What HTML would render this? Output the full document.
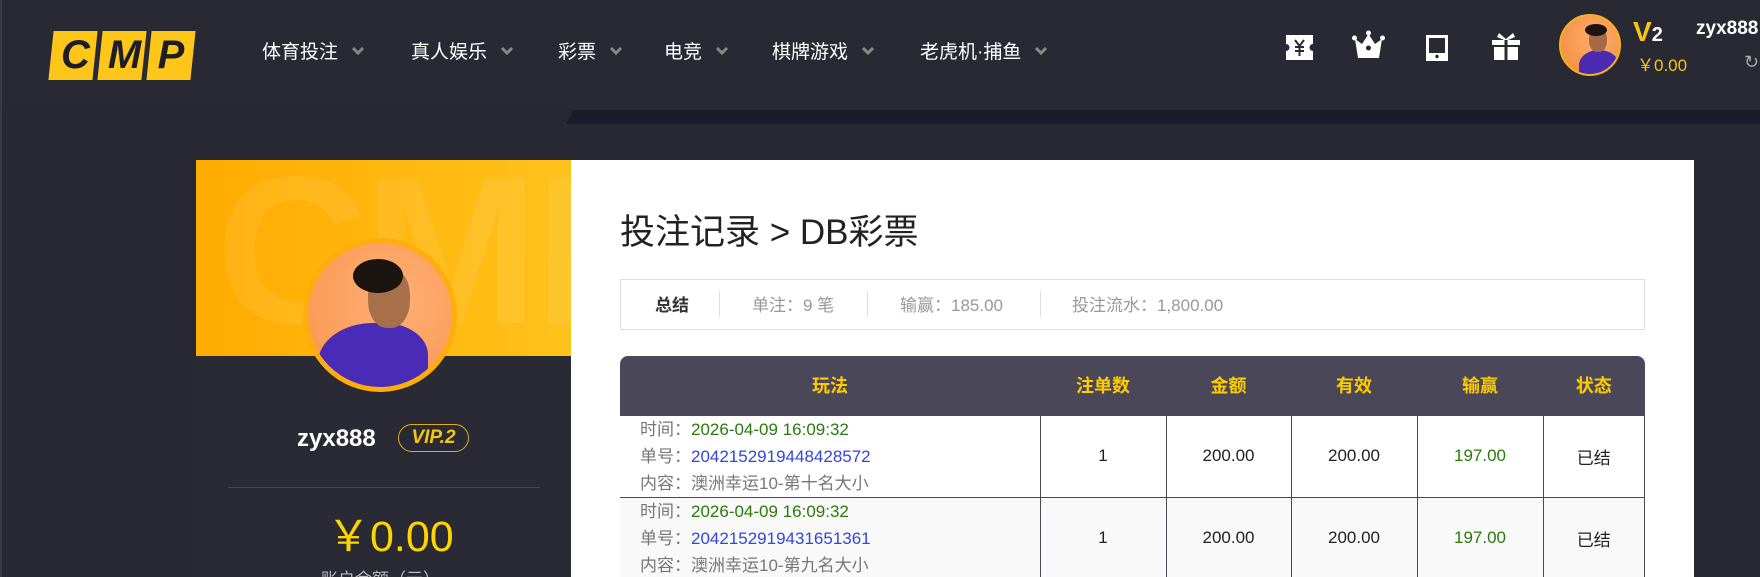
<!DOCTYPE html>
<html style="background:#282833;overflow:hidden;height:577px"><head><meta charset="utf-8">
<style>
*{margin:0;padding:0;box-sizing:border-box}
body{width:1760px;height:577px;overflow:hidden;background:#282833;font-family:"Liberation Sans","Noto Sans CJK SC",sans-serif;position:relative}
.abs{position:absolute}
.hdr{left:0;top:0;width:1760px;height:110px;background:#292934}
.nav{top:37px;font-size:19px;color:#fff;white-space:nowrap}
.chev{display:inline-block;margin-left:14px;vertical-align:3px}
.card{left:196px;top:160px;width:1498px;height:417px;background:#fff}
.lp{left:196px;top:160px;width:375px;height:417px;background:#2a2a34}
.yel{left:196px;top:160px;width:375px;height:196px;background:linear-gradient(90deg,#ffab00,#ffc21c);overflow:hidden}
.sum{left:620px;top:279px;width:1025px;height:51px;border:1px solid #dedede;font-size:17px;color:#999}
.sum span{position:absolute;top:11px;white-space:nowrap}
.sep{position:absolute;top:11px;width:1px;height:26px;background:#ddd}
table{position:absolute;left:620px;top:356px;width:1025px;border-collapse:collapse;font-size:17px}
th{background:#4a4858;color:#ffcc00;height:59px;font-size:18px;font-weight:bold}
td{border:1px solid #4a4858;text-align:center;color:#222;height:79px}
td.l{text-align:left;padding-left:20px;line-height:27px;color:#777;border-left:none}
.g{color:#2b7a0b}.b{color:#3345dd}
</style></head><body>
<div class="abs hdr"></div>
<div class="abs" style="left:0;top:0;width:2px;height:577px;background:#3a3a44"></div>
<div class="abs" style="left:572px;top:110px;width:1188px;height:14px;background:#1c1b2b"></div>
<div class="abs" style="left:566px;top:110px;width:0;height:0;border-right:8px solid #1c1b2b;border-top:14px solid transparent"></div>
<div class="abs" style="left:51px;top:31px">
 <div class="abs" style="left:0;top:0;width:44px;height:49px;background:#ffc61a;transform:skewX(-6deg)"></div>
 <div class="abs" style="left:49px;top:0;width:44px;height:49px;background:#ffc61a;transform:skewX(-6deg)"></div>
 <div class="abs" style="left:98px;top:0;width:44px;height:49px;background:#ffc61a;transform:skewX(-6deg)"></div>
 <div class="abs" style="left:0;top:2px;width:142px;font:italic bold 40px 'Liberation Sans',sans-serif;color:#1d1d25;display:flex"><span style="width:49px;text-align:center">C</span><span style="width:49px;text-align:center">M</span><span style="width:44px;text-align:center">P</span></div>
</div>
<div class="abs nav" style="left:262px">体育投注<svg class="chev" width="12" height="8"><path d="M1 1L6 6L11 1" stroke="#888" stroke-width="3" fill="none"/></svg></div>
<div class="abs nav" style="left:411px">真人娱乐<svg class="chev" width="12" height="8"><path d="M1 1L6 6L11 1" stroke="#888" stroke-width="3" fill="none"/></svg></div>
<div class="abs nav" style="left:558px">彩票<svg class="chev" width="12" height="8"><path d="M1 1L6 6L11 1" stroke="#888" stroke-width="3" fill="none"/></svg></div>
<div class="abs nav" style="left:664px">电竞<svg class="chev" width="12" height="8"><path d="M1 1L6 6L11 1" stroke="#888" stroke-width="3" fill="none"/></svg></div>
<div class="abs nav" style="left:772px">棋牌游戏<svg class="chev" width="12" height="8"><path d="M1 1L6 6L11 1" stroke="#888" stroke-width="3" fill="none"/></svg></div>
<div class="abs nav" style="left:920px">老虎机·捕鱼<svg class="chev" width="12" height="8"><path d="M1 1L6 6L11 1" stroke="#888" stroke-width="3" fill="none"/></svg></div>
<svg class="abs" style="left:1286px;top:35px" width="27" height="25" viewBox="0 0 27 25"><path d="M0 0H27V9A3.5 3.5 0 0 0 27 16V25H0V16A3.5 3.5 0 0 0 0 9Z" fill="#fff"/><path d="M9 5L13.5 11L18 5M13.5 11V21M9 12H18M9 16H18" stroke="#292934" stroke-width="2" fill="none"/></svg>
<svg class="abs" style="left:1352px;top:30px" width="33" height="29" viewBox="0 0 33 29"><circle cx="16.5" cy="3" r="2.5" fill="#fff"/><circle cx="2.5" cy="8" r="2.5" fill="#fff"/><circle cx="30.5" cy="8" r="2.5" fill="#fff"/><path d="M3 9L10 14L16.5 4L23 14L30 9L27 28H6Z" fill="#fff"/><circle cx="16.5" cy="18" r="2.5" fill="#292934"/></svg>
<svg class="abs" style="left:1426px;top:35px" width="22" height="26" viewBox="0 0 22 26"><rect x="1.5" y="1.5" width="19" height="23" fill="none" stroke="#fff" stroke-width="3"/><rect x="1.5" y="18" width="19" height="7" fill="#fff"/><circle cx="11" cy="21.5" r="1.7" fill="#292934"/></svg>
<svg class="abs" style="left:1492px;top:32px" width="28" height="28" viewBox="0 0 28 28"><path d="M7 1L14 7L21 1L23 5L16 8H12L5 5Z" fill="#fff"/><rect x="0" y="8" width="12.5" height="5" fill="#fff"/><rect x="15.5" y="8" width="12.5" height="5" fill="#fff"/><rect x="2" y="15" width="10.5" height="13" fill="#fff"/><rect x="15.5" y="15" width="10.5" height="13" fill="#fff"/></svg>
<div class="abs" style="left:1559px;top:14px;width:62px;height:62px;border-radius:50%;border:2px solid #f3b320;background:radial-gradient(circle at 60% 40%,#ffad6a,#f28a3c);overflow:hidden">
 <div class="abs" style="left:18px;top:34px;width:40px;height:30px;border-radius:50% 50% 0 0;background:#4a2bb0"></div>
 <div class="abs" style="left:28px;top:12px;width:18px;height:24px;border-radius:45%;background:#a56a45"></div>
 <div class="abs" style="left:24px;top:8px;width:22px;height:12px;border-radius:50%;background:#1b1410"></div>
</div>
<div class="abs" style="left:1633px;top:16px;font:bold 28px 'Liberation Sans',sans-serif;color:#f5c518">V<span style="font-size:20px;color:#fff;">2</span></div>
<div class="abs" style="left:1637px;top:51px;font-size:17px;color:#f5c518;white-space:nowrap">￥0.00</div>
<div class="abs" style="left:1696px;top:18px;font:bold 19px 'Liberation Sans',sans-serif;color:#fff;white-space:nowrap">zyx888</div>
<div class="abs" style="left:1744px;top:52px;font-size:18px;color:#aaa">↻</div>
<div class="abs card"></div>
<div class="abs lp"></div>
<div class="abs yel"><div style="position:absolute;left:20px;top:-30px;font:bold 210px 'Liberation Sans',sans-serif;color:rgba(255,255,255,0.08);letter-spacing:-4px">CMP</div></div>
<div class="abs" style="left:303px;top:238px;width:154px;height:154px;border-radius:50%;background:#ffad0a"></div>
<div class="abs" style="left:308px;top:243px;width:144px;height:144px;border-radius:50%;background:radial-gradient(circle at 60% 40%,#ffb077,#f7944a);overflow:hidden">
 <div class="abs" style="left:10px;top:80px;width:110px;height:80px;border-radius:50% 40% 0 0;background:#4a2bb5"></div>
 <div class="abs" style="left:60px;top:25px;width:42px;height:60px;border-radius:45%;background:#a8704a"></div>
 <div class="abs" style="left:45px;top:16px;width:50px;height:34px;border-radius:50%;background:#1b1410"></div>
</div>
<div class="abs" style="left:297px;top:425px;font:bold 24px 'Liberation Sans',sans-serif;color:#fff">zyx888</div>
<div class="abs" style="left:398px;top:424px;width:71px;height:28px;border:1px solid #e5a91a;border-radius:14px;font:italic bold 19px 'Liberation Sans',sans-serif;color:#f5c518;text-align:center;line-height:26px">VIP.2</div>
<div class="abs" style="left:228px;top:487px;width:312px;height:1px;background:#44444e"></div>
<div class="abs" style="left:327px;top:502px;font-size:43px;color:#ffd500;white-space:nowrap">￥0.00</div>
<div class="abs" style="left:321px;top:565px;font-size:17px;color:#bbb;white-space:nowrap">账户余额（元）</div>
<div class="abs" style="left:620px;top:204px;font-size:35px;color:#222;white-space:nowrap">投注记录 &gt; DB彩票</div>
<div class="abs sum">
 <span style="left:34px;color:#333;font-weight:bold">总结</span>
 <div class="sep" style="left:98px"></div>
 <span style="left:131px">单注：9 笔</span>
 <div class="sep" style="left:246px"></div>
 <span style="left:279px">输赢：185.00</span>
 <div class="sep" style="left:419px"></div>
 <span style="left:451px">投注流水：1,800.00</span>
</div>
<table>
<tr><th style="width:420px;border-top-left-radius:8px">玩法</th><th style="width:126px">注单数</th><th style="width:125px">金额</th><th style="width:126px">有效</th><th style="width:126px">输赢</th><th style="border-top-right-radius:8px">状态</th></tr>
<tr><td class="l">时间：<span class="g">2026-04-09 16:09:32</span><br>单号：<span class="b">2042152919448428572</span><br>内容：澳洲幸运10-第十名大小</td><td>1</td><td>200.00</td><td>200.00</td><td class="g">197.00</td><td>已结</td></tr>
<tr style="background:#f9f9f9"><td class="l">时间：<span class="g">2026-04-09 16:09:32</span><br>单号：<span class="b">2042152919431651361</span><br>内容：澳洲幸运10-第九名大小</td><td>1</td><td>200.00</td><td>200.00</td><td class="g">197.00</td><td>已结</td></tr>
</table>
</body></html>
